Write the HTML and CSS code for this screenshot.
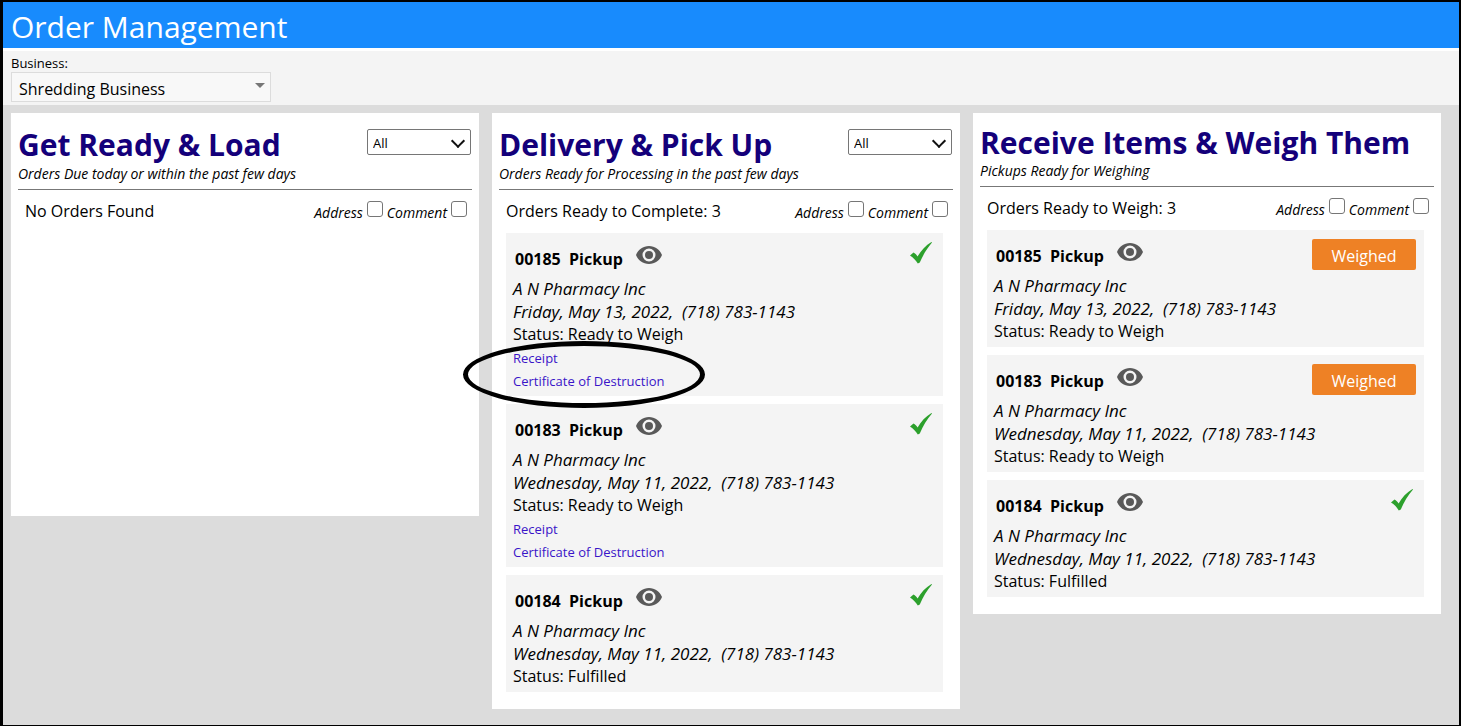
FILE: index.html
```html
<!DOCTYPE html>
<html lang="en">
<head>
    <meta charset="UTF-8">
    <meta name="viewport" content="width=device-width, initial-scale=1.0">
    <title>Order Management</title>
    <link rel="stylesheet" href="styles.css">
</head>
<body>
    <!-- Shared icons -->
    <svg class="icon-defs" width="0" height="0" aria-hidden="true">
        <symbol id="eye" viewBox="0 0 26 18">
            <path fill="#595959" fill-rule="evenodd" d="M13 0C7 0 2.200 3.600 0 9c2.200 5.400 7 9 13 9s10.800-3.600 13-9C23.800 3.600 19 0 13 0zM13 2.500a6.500 6.500 0 1 1 0 13a6.500 6.500 0 0 1 0-13z"/>
            <circle cx="13" cy="9" r="4" fill="#595959"/>
        </symbol>
        <symbol id="check" viewBox="0 0 24 24">
            <path fill="#2ca02c" d="M1 14.500L4.500 11.500C6.200 12.400 7.600 13.800 8.600 15.400C12 9.500 16.500 4.500 22.500 1L23 1.600C18 7.500 14 14 10.800 21.500L8.800 22.600C6.800 19.500 4.500 16.500 1 14.500z"/>
        </symbol>
    </svg>

    <header class="header">
        <h1>Order Management</h1>
    </header>

    <div class="filter-bar">
        <label for="business">Business:</label>
        <div class="business-select">
            <select id="business">
                <option>Shredding Business</option>
            </select>
        </div>
    </div>

    <main class="board">
        <!-- Get Ready & Load -->
        <section class="panel">
            <div class="panel-head">
                <h2>Get Ready &amp; Load</h2>
                <div class="all-select">
                    <select aria-label="Filter loads">
                        <option>All</option>
                    </select>
                </div>
            </div>
            <p class="subtitle">Orders Due today or within the past few days</p>
            <div class="summary">
                <span>No Orders Found</span>
                <div class="toggles">
                    <label for="address1">Address</label>
                    <input type="checkbox" id="address1">
                    <label for="comment1">Comment</label>
                    <input type="checkbox" id="comment1">
                </div>
            </div>
        </section>

        <!-- Delivery & Pick Up -->
        <section class="panel">
            <div class="panel-head">
                <h2>Delivery &amp; Pick Up</h2>
                <div class="all-select">
                    <select aria-label="Filter deliveries">
                        <option>All</option>
                    </select>
                </div>
            </div>
            <p class="subtitle">Orders Ready for Processing in the past few days</p>
            <div class="summary">
                <span>Orders Ready to Complete: 3</span>
                <div class="toggles">
                    <label for="address2">Address</label>
                    <input type="checkbox" id="address2">
                    <label for="comment2">Comment</label>
                    <input type="checkbox" id="comment2">
                </div>
            </div>
            <div class="orders">
                <article class="order">
                    <div class="order-head">
                        <h3>00185&nbsp; Pickup</h3>
                        <button class="icon-btn" aria-label="View order"><svg class="eye"><use href="#eye"/></svg></button>
                        <button class="icon-btn done" aria-label="Complete order"><svg class="check"><use href="#check"/></svg></button>
                    </div>
                    <p class="info">A N Pharmacy Inc</p>
                    <p class="info">Friday, May 13, 2022,&nbsp; (718) 783-1143</p>
                    <p>Status: Ready to Weigh</p>
                    <a href="#">Receipt</a>
                    <a href="#">Certificate of Destruction</a>
                    <div class="highlight"></div>
                </article>
                <article class="order">
                    <div class="order-head">
                        <h3>00183&nbsp; Pickup</h3>
                        <button class="icon-btn" aria-label="View order"><svg class="eye"><use href="#eye"/></svg></button>
                        <button class="icon-btn done" aria-label="Complete order"><svg class="check"><use href="#check"/></svg></button>
                    </div>
                    <p class="info">A N Pharmacy Inc</p>
                    <p class="info">Wednesday, May 11, 2022,&nbsp; (718) 783-1143</p>
                    <p>Status: Ready to Weigh</p>
                    <a href="#">Receipt</a>
                    <a href="#">Certificate of Destruction</a>
                </article>
                <article class="order">
                    <div class="order-head">
                        <h3>00184&nbsp; Pickup</h3>
                        <button class="icon-btn" aria-label="View order"><svg class="eye"><use href="#eye"/></svg></button>
                        <button class="icon-btn done" aria-label="Complete order"><svg class="check"><use href="#check"/></svg></button>
                    </div>
                    <p class="info">A N Pharmacy Inc</p>
                    <p class="info">Wednesday, May 11, 2022,&nbsp; (718) 783-1143</p>
                    <p>Status: Fulfilled</p>
                </article>
            </div>
        </section>

        <!-- Receive & Weigh -->
        <section class="panel">
            <div class="panel-head compact">
                <h2>Receive Items &amp; Weigh Them</h2>
            </div>
            <p class="subtitle">Pickups Ready for Weighing</p>
            <div class="summary">
                <span>Orders Ready to Weigh: 3</span>
                <div class="toggles">
                    <label for="address3">Address</label>
                    <input type="checkbox" id="address3">
                    <label for="comment3">Comment</label>
                    <input type="checkbox" id="comment3">
                </div>
            </div>
            <div class="orders">
                <article class="order">
                    <div class="order-head">
                        <h3>00185&nbsp; Pickup</h3>
                        <button class="icon-btn" aria-label="View order"><svg class="eye"><use href="#eye"/></svg></button>
                        <button class="weighed">Weighed</button>
                    </div>
                    <p class="info">A N Pharmacy Inc</p>
                    <p class="info">Friday, May 13, 2022,&nbsp; (718) 783-1143</p>
                    <p>Status: Ready to Weigh</p>
                </article>
                <article class="order">
                    <div class="order-head">
                        <h3>00183&nbsp; Pickup</h3>
                        <button class="icon-btn" aria-label="View order"><svg class="eye"><use href="#eye"/></svg></button>
                        <button class="weighed">Weighed</button>
                    </div>
                    <p class="info">A N Pharmacy Inc</p>
                    <p class="info">Wednesday, May 11, 2022,&nbsp; (718) 783-1143</p>
                    <p>Status: Ready to Weigh</p>
                </article>
                <article class="order">
                    <div class="order-head">
                        <h3>00184&nbsp; Pickup</h3>
                        <button class="icon-btn" aria-label="View order"><svg class="eye"><use href="#eye"/></svg></button>
                        <button class="icon-btn done" aria-label="Complete order"><svg class="check"><use href="#check"/></svg></button>
                    </div>
                    <p class="info">A N Pharmacy Inc</p>
                    <p class="info">Wednesday, May 11, 2022,&nbsp; (718) 783-1143</p>
                    <p>Status: Fulfilled</p>
                </article>
            </div>
        </section>
    </main>
</body>
</html>
```
FILE: styles.css
```css
* {
    box-sizing: border-box;
}
body {
    font-family: "Segoe UI", "Open Sans", sans-serif;
    font-size: 16px;
    line-height: 23px;
    margin: 0;
    min-height: 100vh;
    color: #000;
    background-color: #dcdcdc;
    border: 2px solid #000;
    border-left-width: 3px;
}
h1, h2, h3, p {
    margin: 0;
}
button, select {
    font-family: inherit;
    color: inherit;
}
.icon-defs {
    position: absolute;
}
.header {
    background-color: #188bfd;
    color: white;
    padding: 2px 8px 0;
    height: 46px;
}
.header h1 {
    font-size: 30px;
    font-weight: 400;
    line-height: 46px;
}
.filter-bar {
    background-color: #f4f4f4;
    border-top: 3px solid white;
    padding: 3px 8px;
}
.filter-bar label {
    display: block;
    font-size: 13px;
    line-height: 18px;
}
.business-select {
    position: relative;
    width: 260px;
}
.business-select select {
    appearance: none;
    display: block;
    width: 100%;
    height: 30px;
    padding: 3px 7px 0;
    font-size: 16px;
    border: 1px solid #dcdcdc;
    border-radius: 0;
    background-color: #f8f8f8;
}
.business-select::after {
    content: "";
    position: absolute;
    top: 11px;
    right: 6px;
    border: 5px solid transparent;
    border-top-color: #777;
    border-bottom-width: 0;
}
.board {
    display: grid;
    grid-template-columns: repeat(3, 1fr);
    align-items: start;
    gap: 13px;
    padding: 8px 18px 16px 8px;
}
.panel {
    background-color: white;
    min-height: 403px;
    padding: 11px 7px 17px;
}
.panel-head {
    display: flex;
    align-items: center;
    justify-content: space-between;
    height: 41px;
}
.panel-head.compact {
    height: 38px;
}
.panel-head h2 {
    font-size: 30px;
    line-height: 38px;
    color: #14007a;
    white-space: nowrap;
}
.all-select {
    position: relative;
    width: 104px;
    margin: 0 1px 6px 0;
}
.all-select select {
    appearance: none;
    display: block;
    width: 100%;
    height: 26px;
    padding: 2px 5px 0;
    font-size: 13px;
    border: 1px solid #767676;
    border-radius: 2px;
    background-color: white;
}
.all-select::after {
    content: "";
    position: absolute;
    top: 7px;
    right: 8px;
    width: 8px;
    height: 8px;
    border: solid #111;
    border-width: 0 2px 2px 0;
    transform: rotate(45deg);
}
.subtitle {
    font-size: 14px;
    font-style: italic;
    line-height: 18px;
    padding-bottom: 6px;
    border-bottom: 1px solid #777;
}
.summary {
    display: flex;
    justify-content: space-between;
    align-items: center;
    height: 43px;
    padding: 0 5px 0 7px;
}
.toggles {
    display: flex;
    align-items: center;
    gap: 4px;
    font-size: 14px;
    font-style: italic;
}
.toggles label {
    padding-top: 1px;
}
.toggles input {
    appearance: none;
    width: 16px;
    height: 16px;
    margin: 0 0 5px;
    border: 1px solid #767676;
    border-radius: 3px;
    background-color: white;
}
.orders {
    display: flex;
    flex-direction: column;
    gap: 8px;
    padding: 0 10px 0 7px;
}
.order {
    position: relative;
    background-color: #f4f4f4;
    padding: 0 7px 4px;
}
.order-head {
    display: flex;
    height: 44px;
    padding-left: 2px;
}
.order-head h3 {
    font-size: 16px;
    line-height: 23px;
    padding-top: 15px;
    margin-right: 13px;
}
.icon-btn {
    align-self: flex-start;
    padding: 0;
    border: none;
    background: none;
    cursor: pointer;
    margin-top: 13px;
}
.icon-btn svg {
    display: block;
}
.eye {
    width: 26px;
    height: 18px;
}
.check {
    width: 24px;
    height: 24px;
}
.done {
    margin: 8px 3px 0 auto;
}
.info {
    font-size: 17px;
    font-style: italic;
}
.order a {
    display: table;
    padding-top: 1px;
    font-size: 13px;
    line-height: 22px;
    color: #3a14c8;
    text-decoration: none;
}
.weighed {
    align-self: flex-start;
    width: 104px;
    height: 31px;
    margin: 9px 1px 0 auto;
    padding: 2px 0 0;
    font-size: 16px;
    color: white;
    background-color: #ee8125;
    border: none;
    border-radius: 2px;
    cursor: pointer;
}
/* ring around the document links */
.highlight {
    position: absolute;
    left: -43px;
    top: 108px;
    width: 242px;
    height: 67px;
    border: 5px solid #000;
    border-radius: 50%;
    z-index: 1;
    pointer-events: none;
}
```
